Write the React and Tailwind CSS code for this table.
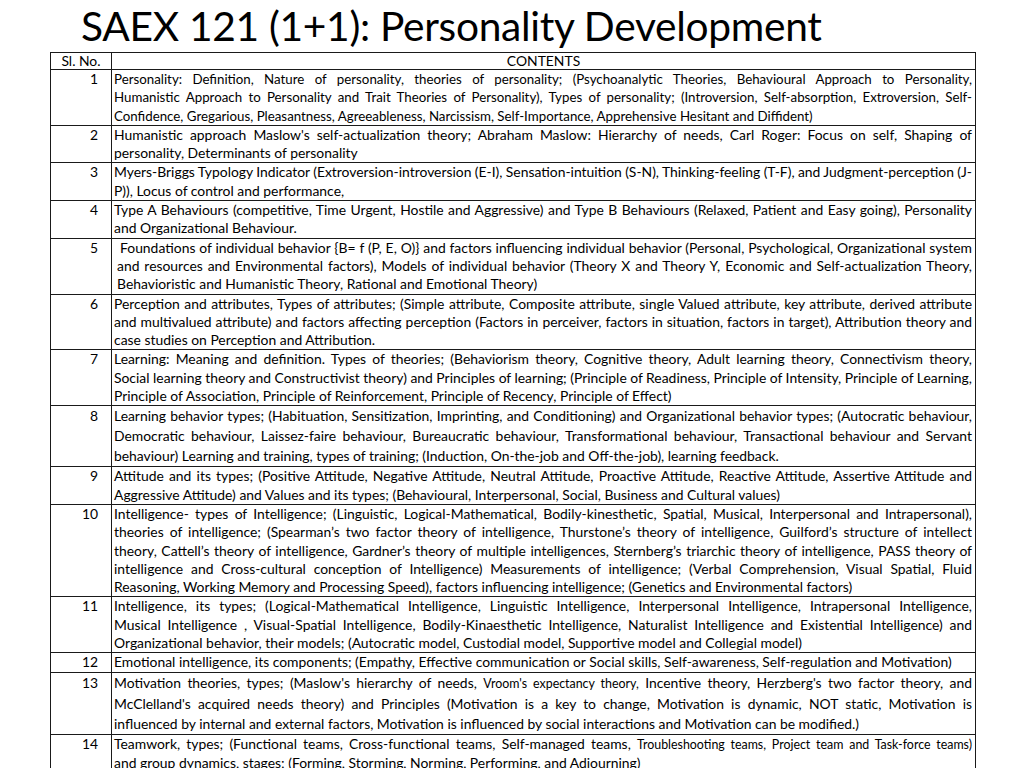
const rows = [
  {
    no: '1',
    small: true,
    lines: [
      'Personality: Definition, Nature of personality, theories of personality; (Psychoanalytic Theories, Behavioural Approach to Personality,',
      'Humanistic Approach to Personality and Trait Theories of Personality), Types of personality; (Introversion, Self-absorption, Extroversion, Self-',
      'Confidence, Gregarious, Pleasantness, Agreeableness, Narcissism, Self-Importance, Apprehensive Hesitant and Diffident)',
    ],
  },
  {
    no: '2',
    lines: [
      "Humanistic approach Maslow's self-actualization theory; Abraham Maslow: Hierarchy of needs, Carl Roger: Focus on self, Shaping of",
      'personality, Determinants of personality',
    ],
  },
  {
    no: '3',
    lines: [
      'Myers-Briggs Typology Indicator (Extroversion-introversion (E-I), Sensation-intuition (S-N), Thinking-feeling (T-F), and Judgment-perception (J-',
      'P)), Locus of control and performance,',
    ],
  },
  {
    no: '4',
    lines: [
      'Type A Behaviours (competitive, Time Urgent, Hostile and Aggressive) and Type B Behaviours (Relaxed, Patient and Easy going), Personality',
      'and Organizational Behaviour.',
    ],
  },
  {
    no: '5',
    indent: true,
    lines: [
      'Foundations of individual behavior {B= f (P, E, O)} and factors influencing individual behavior (Personal, Psychological, Organizational system',
      'and resources and Environmental factors), Models of individual behavior (Theory X and Theory Y, Economic and Self-actualization Theory,',
      'Behavioristic and Humanistic Theory, Rational and Emotional Theory)',
    ],
  },
  {
    no: '6',
    lines: [
      'Perception and attributes, Types of attributes; (Simple attribute, Composite attribute, single Valued attribute, key attribute, derived attribute',
      'and multivalued attribute) and factors affecting perception (Factors in perceiver, factors in situation, factors in target), Attribution theory and',
      'case studies on Perception and Attribution.',
    ],
  },
  {
    no: '7',
    lines: [
      'Learning: Meaning and definition. Types of theories; (Behaviorism theory,  Cognitive theory, Adult learning theory, Connectivism theory,',
      'Social learning theory and Constructivist theory) and Principles of learning; (Principle of Readiness, Principle of Intensity, Principle of Learning,',
      'Principle of Association, Principle of Reinforcement, Principle of Recency, Principle of Effect)',
    ],
  },
  {
    no: '8',
    tall: true,
    lines: [
      'Learning behavior types; (Habituation, Sensitization, Imprinting, and Conditioning) and Organizational behavior types; (Autocratic behaviour,',
      'Democratic behaviour, Laissez-faire behaviour, Bureaucratic behaviour, Transformational behaviour, Transactional behaviour and Servant',
      'behaviour) Learning and training, types of training; (Induction, On-the-job and Off-the-job), learning feedback.',
    ],
  },
  {
    no: '9',
    lines: [
      'Attitude and its types; (Positive Attitude, Negative Attitude, Neutral Attitude, Proactive Attitude, Reactive Attitude, Assertive Attitude and',
      'Aggressive Attitude) and Values and its types; (Behavioural, Interpersonal, Social, Business and Cultural values)',
    ],
  },
  {
    no: '10',
    lines: [
      'Intelligence- types of Intelligence; (Linguistic, Logical-Mathematical, Bodily-kinesthetic, Spatial, Musical, Interpersonal and Intrapersonal),',
      'theories of intelligence; (Spearman’s two factor theory of intelligence, Thurstone’s theory of intelligence, Guilford’s structure of intellect',
      'theory, Cattell’s theory of intelligence, Gardner’s theory of multiple intelligences, Sternberg’s triarchic theory of intelligence, PASS theory of',
      'intelligence and  Cross-cultural conception of Intelligence) Measurements of intelligence; (Verbal Comprehension, Visual Spatial, Fluid',
      'Reasoning, Working Memory and Processing Speed), factors influencing intelligence; (Genetics and Environmental factors)',
    ],
  },
  {
    no: '11',
    lines: [
      'Intelligence, its types; (Logical-Mathematical Intelligence, Linguistic Intelligence, Interpersonal Intelligence, Intrapersonal Intelligence,',
      'Musical Intelligence , Visual-Spatial Intelligence, Bodily-Kinaesthetic Intelligence, Naturalist Intelligence and Existential Intelligence) and',
      'Organizational behavior, their models; (Autocratic model, Custodial model, Supportive model and Collegial model)',
    ],
  },
  {
    no: '12',
    lines: [
      'Emotional intelligence, its components; (Empathy, Effective communication or Social skills, Self-awareness, Self-regulation and Motivation)',
    ],
  },
  {
    no: '13',
    tall: true,
    lines: [
      <>
        Motivation theories, types; (Maslow's hierarchy of needs,{' '}
        <span className="text-[12.4px]">Vroom's expectancy theory,</span> Incentive theory, Herzberg's two factor theory, and
      </>,
      "McClelland's acquired needs theory) and Principles (Motivation is a key to change, Motivation is dynamic, NOT static, Motivation is",
      'influenced by internal and external factors, Motivation is influenced by social interactions and Motivation can be modified.)',
    ],
  },
  {
    no: '14',
    lines: [
      <>
        Teamwork, types; (Functional teams, Cross-functional teams, Self-managed teams,{' '}
        <span className="text-[12.4px]">Troubleshooting teams, Project team and Task-force teams)</span>
      </>,
      'and group dynamics, stages; (Forming, Storming, Norming, Performing, and Adjourning)',
    ],
  },
];

function Row({ row }) {
  const lead = row.tall ? 'leading-[20px]' : 'leading-[18.3px]';
  const size = row.small ? 'text-[13.3px]' : 'text-[13.9px]';
  return (
    <tr>
      <td className={`border border-[#1a1a1a] pr-[13px] text-right align-top text-[13.9px] ${lead}`}>{row.no}</td>
      <td className={`border border-[#1a1a1a] pr-[3px] align-top ${size} ${lead} ${row.indent ? 'pl-[5px]' : 'pl-[2px]'}`}>
        {row.lines.map((line, i) => {
          const last = i === row.lines.length - 1;
          return (
            <div
              key={i}
              className={`${last ? 'text-left' : 'text-justify [text-align-last:justify] [word-spacing:-2px]'} ${row.indent && i === 0 ? 'pl-[3px]' : ''}`}
            >
              {line}
            </div>
          );
        })}
      </td>
    </tr>
  );
}

export default function App() {
  return (
    <div className="h-[768px] w-[1024px] overflow-hidden bg-white font-['Lato','Liberation_Sans',sans-serif] text-black">
      <h1 className="pl-[81px] pt-[1px] text-[40.7px] leading-[50px] tracking-[-0.3px]">
        SAEX 121 (1+1): Personality Development
      </h1>
      <table className="ml-[50px] mt-[1px] w-[926px] table-fixed border-collapse text-[13.9px]">
        <colgroup>
          <col className="w-[61px]" />
          <col />
        </colgroup>
        <thead>
          <tr>
            <th className="border border-[#1a1a1a] text-center font-normal leading-[16px]">Sl. No.</th>
            <th className="border border-[#1a1a1a] text-center font-normal leading-[16px]">CONTENTS</th>
          </tr>
        </thead>
        <tbody>
          {rows.map((row) => (
            <Row key={row.no} row={row} />
          ))}
        </tbody>
      </table>
    </div>
  );
}
